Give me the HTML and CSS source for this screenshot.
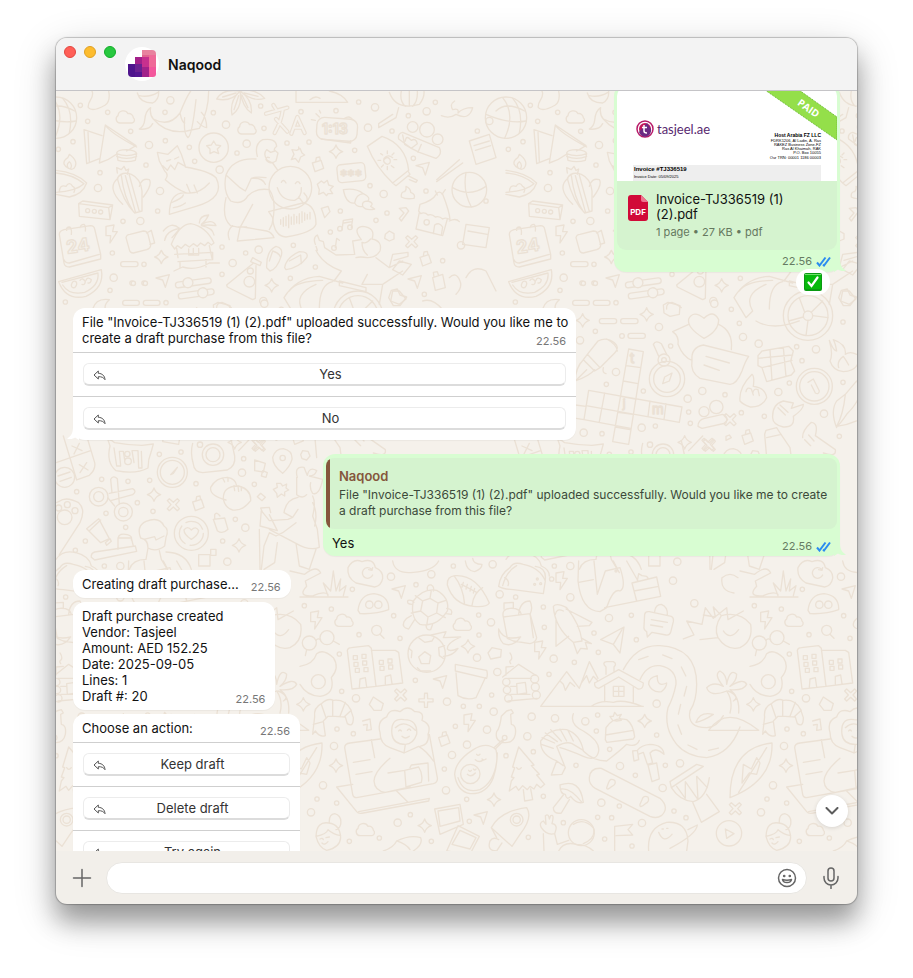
FILE: index.html
```html
<!DOCTYPE html>
<html lang="en">
<head>
<meta charset="utf-8">
<meta name="viewport" content="width=device-width, initial-scale=1">
<title>Naqood</title>
<link rel="stylesheet" href="styles.css">
</head>
<body>
<svg class="defs" aria-hidden="true">
  <defs>
    <symbol id="reply" viewBox="0 0 13 11"><path d="M5.3 1 1 5l4.300 4V6.700c3.300-.1 5.200.7 6.700 3C11.800 6 9.500 3.500 5.300 3.300z"/></symbol>
    <symbol id="ticks" viewBox="0 0 15 11"><path d="M1 6.500 3.500 9.500 9.500 1.500M7 8.500l1 1L14 1.500"/></symbol>
    <symbol id="tail" viewBox="0 0 12 14"><path d="M0 0h6c0 6 1 10 6 12.500-3 1-6 .5-8-1L0 14z"/></symbol>
    <path id="spark" d="M0-20Q5-5 20 0Q5 5 0 20Q-5 5-20 0Q-5-5 0-20z"/>
    <path id="bolt" d="M-16-24 8-28 4-8 18-8-4 26-2 4-16 4z"/>
    <path id="cloud" d="M-16 18a12 12 0 0 1-6-22a16 16 0 0 1 30-6a13 13 0 0 1 16 12a9 9 0 0 1-4 16z"/>
    <path id="plane" d="M-20-8 20-18 8 20 0-2z"/>
    <path id="cross" d="M-18-12-12-18 0-7 12-18 18-12 7 0 18 12 12 18 0 7-12 18-18 12-7 0z"/>
    <path id="tag" d="M-16-6 10-14 18 10-8 20zM-6-10-4-22 6-24 8-14"/>
    <path id="smallRings" d="M73 43h0M155 64h0M95 91h0M224 121h0M51 152h0M328 149h0M7 175h0M400 169h0M472 65h0M327 64h0M416 211h0M270 222h0M132 245h0M305 360h0M201 391h0M169 486h0M264 520h0M232 577h0M268 577h0M162 598h0M28 633h0M543 186h0M614 45h0M624 112h0M693 156h0M759 153h0M735 62h0M840 59h0M908 33h0M896 178h0M942 284h0M1008 120h0M1057 74h0M1138 34h0M1072 202h0M1110 300h0M993 366h0M960 388h0M853 360h0M823 423h0M712 463h0M569 486h0M498 468h0M498 550h0M703 562h0M778 528h0M1160 509h0M1105 610h0M330 635h0M1264 120h0M1290 330h0M1618 721h0M1844 765h0M1651 880h0M1762 900h0M1898 963h0M1903 997h0M1798 1005h0M1638 1028h0M2007 911h0M2056 965h0M2125 976h0M2200 876h0M2238 809h0M2222 767h0M2050 697h0M2026 655h0M2361 693h0M2361 874h0M2350 1036h0M1578 576h0M1614 576h0M137 1165h0M216 1171h0M281 1168h0M310 1090h0M375 1083h0M62 1202h0M150 1267h0M244 1235h0M291 1261h0M209 1309h0M88 1350h0M58 1378h0M145 1425h0M420 1178h0M563 1103h0M595 1180h0M538 1285h0M500 1350h0M1192 1425h0M889 1495h0M745 1544h0M826 1554h0M909 1631h0M1013 1574h0M1080 1481h0M1268 1572h0M1269 1632h0M1379 1518h0M1462 1548h0M1465 1609h0M1487 1464h0M1614 1626h0M1741 1646h0M1726 1573h0M1627 1684h0M1555 1714h0M1479 1750h0M1307 1812h0M1270 1846h0M1222 1846h0M1078 1768h0M1032 1642h0M850 1689h0M857 1801h0M843 1914h0M892 1928h0M1198 1906h0M1350 1994h0M1165 2034h0M1232 2125h0M1462 2116h0M1432 1982h0M1560 2023h0M1621 1920h0M1625 1872h0M1661 1975h0M1738 2053h0M1828 2023h0M1802 1932h0M1690 2145h0M1667 2180h0M1625 2179h0M1646 2244h0M1522 2195h0M1417 2239h0M1240 2191h0M1126 2251h0M1063 2171h0M970 2241h0M880 2251h0M842 2136h0M783 2124h0M1890 2180h0M1728 2265h0M1854 2160h0"/>
    <path id="largeRings" d="M343 28h0M510 101h0M279 162h0M572 158h0M491 236h0M126 291h0M312 300h0M253 390h0M173 560h0M608 476h0M530 516h0M625 638h0M936 110h0M957 49h0M1112 61h0M983 309h0M1215 463h0M1300 90h0M1572 748h0M1680 843h0M1809 708h0M1972 630h0M2061 738h0M2108 758h0M2280 775h0M1939 900h0M1895 923h0M1757 1010h0M1583 1025h0M2167 903h0M2304 968h0M558 1145h0M568 1310h0M514 1412h0M193 1425h0M1005 1457h0M1126 1450h0M1310 1420h0M1331 1510h0M1305 1594h0M1543 1519h0M1659 1581h0M1851 1469h0M1915 1537h0M1493 1703h0M1263 1700h0M1324 1743h0M1173 1832h0M1313 1862h0M1427 1877h0M1414 1936h0M1293 1916h0M1233 1961h0M1188 1992h0M900 1822h0M834 1965h0M801 2083h0M765 2164h0M1025 2195h0M1170 2098h0M1497 1882h0M1588 1891h0M1802 1838h0M1692 2025h0M1872 2017h0M1820 2091h0M1636 2135h0M1758 2196h0"/>
    <g id="doodles">
      <use href="#smallRings" stroke-width="17"/><use href="#smallRings" class="ring-core" stroke-width="9"/>
      <use href="#largeRings" stroke-width="26"/><use href="#largeRings" class="ring-core" stroke-width="18"/>
      <use href="#cloud" x="208" y="78"/><use href="#cloud" x="573" y="111"/><use href="#spark" x="316" y="498"/><use href="#spark" x="647" y="583"/><use href="#spark" x="840" y="182"/><use href="#bolt" x="166" y="430"/><use href="#plane" x="320" y="569"/><use href="#plane" x="1100" y="232"/><use href="#plane" x="1076" y="572"/><use href="#tag" x="785" y="222"/><use href="#tag" x="1108" y="505"/><use href="#cross" x="1067" y="452"/>
      <!-- globe, sock, bowl, whale -->
      <circle cy="80" r="62"/><path d="M-10 20Q30 70-4 142M-60 70Q10 100 60 90M20 22Q54 60 40 126M-30 60Q0 30 56 60M108 0C118 20 92 32 97 50Q110 64 148 42Q164 30 158 0M244 6Q252 36 290 36Q310 26 308 0M250 14Q280 20 306 4"/>
      <path d="M250 114Q264 106 266 88Q268 60 284 50Q280 70 292 84Q340 110 372 66Q390 20 404 0M250 114Q280 118 290 98M292 84Q330 130 392 120L430 112Q458 60 458 0M386 80Q382 130 396 140Q408 134 420 26M424 92Q438 108 452 110Q452 80 436 64M372 66Q378 94 386 96"/>
      <!-- flower, letters, clock -->
      <path d="M552 0Q500-8 482 24Q526 34 552 0Q520 30 528 72Q560 50 552 0Q560 50 586 66Q590 26 552 0Q590 34 626 22Q596-10 552 0M500 18 540 6M534 56 548 14M576 50 558 12M606 16 564 6M720 34H875Q860 8 820 0M720 34V0M762 26Q778 12 792 22"/>
      <g stroke-width="13"><path d="M630 68 694 50M652 42 662 58M680 58Q676 90 656 126M660 84 694 122M706 128 724 78 746 126M714 110H738"/></g>
      <g stroke-width="6" class="core"><path d="M630 68 694 50M652 42 662 58M680 58Q676 90 656 126M660 84 694 122M706 128 724 78 746 126M714 110H738"/></g>
      <rect x="782" y="82" width="122" height="66" rx="22" transform="rotate(4 843 115)"/><path d="M796 144 884 156V150M866 82Q880 72 890 86M780 68 790 78M790 58 794 66M766 86 778 88"/>
      <text x="798" y="128" font-size="42" font-weight="700">1:13</text>
      <!-- samosa, fox, cactus, lamp -->
      <path d="M84 116 92 218 132 202M84 116 138 134M96 124 100 212M130 216 148 102 240 164 212 180M148 102Q160 124 242 168M130 216Q160 206 184 188M182 186Q184 176 212 176Q240 178 242 188L238 208Q212 216 186 208zM182 188Q212 200 242 188M182 196Q212 208 242 196"/>
      <path d="M326 240 310 210 304 184 336 190 364 164 376 190 388 226 366 214 356 236 344 222 334 238 320 224M326 240Q340 252 328 266Q356 292 392 306Q430 310 460 276M388 228Q460 240 480 260Q510 320 420 346L340 370Q340 300 392 306M344 336Q380 322 382 312M352 350Q376 346 388 336M402 304 392 280M424 306 414 282M332 210 344 206M356 204 368 198"/>
      <path d="M236 366Q200 330 184 262Q196 240 226 250Q254 262 258 300L258 360zM208 254 238 362M220 252 250 362M196 254Q204 320 230 358M186 262Q150 290 200 340M250 286Q256 260 280 266Q290 280 262 318M184 246 182 230 196 236 204 226 210 238 218 234 214 250M0 238Q60 244 92 276Q80 310 40 318L0 310M0 246Q50 250 84 278Q60 300 0 304M10 304Q10 280 30 286Q40 270 50 286Q60 290 54 304M38 232Q16 220 28 206Q38 200 40 190Q70 212 54 232Q46 238 38 232M36 230Q30 220 40 212Q50 220 44 232"/>
      <circle cx="473" cy="170" r="44"/><path d="M473 150 480 162 494 164 484 174 488 188 474 182 462 188 462 174 452 164 466 162z"/>
      <!-- cassette, calendar, camera, hut, watermelon -->
      <path d="M68 338 80 330 170 342 162 386 70 376zM68 338 158 350 170 342M158 350 162 386"/><circle cx="95" cy="359" r="6"/><circle cx="115" cy="361" r="6"/><circle cx="134" cy="363" r="6"/>
      <path d="M10 430Q10 420 24 416L104 404Q114 404 116 414L134 490V504L40 528Q26 528 24 516zM24 506Q28 516 40 516L130 490M32 418Q30 408 40 408Q48 410 46 430M72 410Q74 400 84 400Q90 404 88 420"/><text x="34" y="488" font-size="54" font-weight="700" transform="rotate(-8 34 488)">24</text>
      <path d="M210 440Q212 430 222 430L262 420Q274 420 276 430L284 462Q284 472 272 476L232 486Q222 486 220 476zM272 426 286 418 296 456 282 460"/>
      <path d="M346 460Q370 400 404 398Q450 406 474 456L466 462 456 454 446 464 434 456 424 466 412 458 400 468 388 460 376 472 364 464 356 474zM362 472 366 500M460 464 468 502M356 490 470 484 470 506 366 512M372 512V530M450 506V528M354 540 380 528Q420 540 460 516H490M398 474V492H428V472M412 472V492M322 420Q346 390 370 412Q330 420 326 448M348 440 372 412M430 396Q430 374 458 372Q450 390 436 400Q470 382 480 404Q450 400 436 404Q470 410 474 432"/>
      <path d="M8 572 136 536Q146 590 90 616Q30 630 8 572M18 574 126 546Q130 584 86 604Q40 614 20 582M46 582Q50 566 60 572Q66 580 56 590Q46 592 46 582M72 568Q80 558 88 572Q86 584 78 580M90 568Q94 556 106 566Q104 578 96 576"/>
      <rect x="194" y="512" width="52" height="15" rx="7"/><rect x="200" y="628" width="50" height="15" rx="7"/><rect x="262" y="628" width="50" height="15" rx="7"/><g transform="rotate(-8 420 590)"><rect x="360" y="566" width="108" height="17" rx="8"/><circle cx="398" cy="572" r="15" class="core"/><rect x="364" y="600" width="108" height="17" rx="8"/><circle cx="438" cy="608" r="15" class="core"/></g>
      <!-- seated reader, emoji, voice note -->
      <path d="M604 196Q594 160 620 146Q660 140 662 166Q652 174 656 180L644 184 632 176Q620 190 634 208L650 216M640 200Q630 196 630 206Q640 222 660 210L666 186 656 178M600 204Q530 200 510 252L552 290 568 300 574 288M510 252Q500 300 524 330Q560 344 576 314Q600 290 640 296Q664 330 648 400L640 416M510 320Q496 380 524 404L552 410M552 410 544 450 654 440Q648 424 632 420L562 408M552 410 590 340M520 446Q510 420 530 404M630 260Q600 256 586 262L574 288M590 262Q620 260 628 280M546 408H572M650 216 664 236"/>
      <circle cx="703" cy="290" r="64"/><path d="M664 290Q676 330 716 328Q738 318 736 290M676 274Q682 262 690 276M718 278Q726 266 732 278M728 318 742 336Q758 334 752 316L744 306M638 362 740 336Q780 340 780 400Q770 426 690 438Q654 436 650 380zM674 386V400M682 380V406M690 376V404M698 372V410M706 378V400M714 370V400M722 376V396M730 368V398M738 362V394M746 366V388M754 370V384M762 364V384"/>
      <path d="M706 206 714 190 708 176 722 178 732 172 738 186 746 192 734 198 728 214 718 202zM728 176V168"/>
      <path d="M784 280 796 270 804 276 814 268 818 282 832 286 822 296 830 308 816 308 812 314 802 304 788 310 790 296z"/>
      <rect x="844" y="218" width="84" height="54" rx="12" transform="rotate(-6 886 245)"/><text x="852" y="270" font-size="44">***</text>
      <!-- sunscreen, shell, house, hands, cat -->
      <path d="M934 166 978 136Q1050 160 1058 238L1010 276Q960 230 934 166M1010 276 1020 284 1062 250 1056 240M1056 254 1084 268 1080 274 1060 266M985 205Q994 194 1002 205Q1006 218 994 220Q980 216 984 202Q996 188 1010 200M994 180V188M994 226V236M966 208H974M1014 206H1022M974 188 980 192M1008 192 1014 186M976 228 982 222M1006 224 1014 230"/>
      <path d="M862 296Q900 290 922 308Q946 320 936 330Q956 336 944 346L956 354Q930 360 920 346Q904 350 896 336Q870 340 862 296M896 336Q900 310 922 308M920 346Q916 330 936 330M1036 318Q1034 302 1046 302Q1052 296 1050 286Q1064 292 1064 304Q1080 310 1074 322Q1050 326 1036 318M1088 360 1092 340Q1130 330 1142 308 1150 298 1160 310 1180 360 1182 386 1170 378 1160 384 1150 374 1138 378 1128 368 1116 372 1106 362 1094 368zM1090 364 1080 414 1160 434 1174 384M1132 428 1136 402Q1150 392 1160 408L1156 432M1144 312 1138 300M1158 310 1168 296"/><circle cx="1112" cy="394" r="8"/>
      <path d="M1028 144Q1024 128 1040 124L1150 170Q1160 190 1140 202L1090 184 1066 172zM1040 132 1046 160 1066 172 1084 158Q1080 140 1066 148Q1050 130 1048 150M1086 184 1096 160M1000 4Q1020 60 1090 40Q1106 20 1104 0M1036 0Q1030 30 1048 46M1060 0V46M1084 0Q1086 30 1070 46M1028 50 1020 80 968 110V98L1010 70M1142 266 1210 206M1142 272 1220 216M1156 74Q1180 84 1200 70Q1240 90 1250 50Q1220 50 1206 66Q1210 50 1190 56Q1180 40 1196 30"/><circle cx="1070" cy="108" r="16"/><circle cx="1113" cy="116" r="22"/><circle cx="1145" cy="145" r="16"/><circle cx="1240" cy="296" r="52"/><path d="M1190 290Q1240 320 1290 286M1230 244Q1220 300 1246 348M1180 390Q1200 380 1210 392M1240 150 1300 130 1320 200 1260 220zM1254 164 1300 150M1258 178 1304 164M1230 400 1300 410 1290 470 1220 460zM1236 420 1294 430M1230 560Q1250 520 1290 540L1320 600M1180 560Q1200 540 1212 570 1220 590 1200 610"/>
      <!-- dancer, bicycle, flask, slippers, notes -->
      <path d="M858 416 862 388 890 384 886 410M864 396 888 392M838 470 842 442 850 448M778 460Q770 440 784 432L790 448 802 452 806 470 840 492 896 490M784 478 780 466M780 478Q800 520 856 540L834 570M896 490 890 450 916 446Q888 410 920 406Q960 410 948 444 980 450 972 480 960 500 934 500 912 496 900 500M944 444Q930 460 918 454 918 480 934 492M960 500 1000 530 1040 510M934 550 918 580 980 580 1040 540M1000 530 1010 490 1056 484 1056 496 1014 508M1010 536 1030 510 1066 520 1040 552zM980 580 970 640"/>
      <circle cx="852" cy="413" r="7"/><circle cx="882" cy="409" r="7"/><circle cx="834" cy="471" r="7"/><circle cx="906" cy="674" r="74"/><circle cx="906" cy="674" r="60"/><circle cx="906" cy="674" r="14"/><path d="M896 664 880 620M916 664 950 630M920 674 966 680M906 688 900 734M892 678 848 690M684 620Q720 560 790 556L860 576M684 620 720 680 740 660Q710 610 780 580M700 600Q720 570 800 568M790 654Q790 580 830 572M850 570 930 590 930 602 850 584zM750 690Q800 720 880 690"/>
      <path d="M584 512 590 500 616 514 612 524zM590 518 512 582 514 588 590 626 598 622 600 524"/><circle cx="583" cy="540" r="9"/><circle cx="580" cy="572" r="16"/><path d="M632 530Q630 480 660 466Q682 470 676 494Q664 534 642 540zM640 510 650 480Q670 486 674 500M686 530Q690 500 730 482Q760 482 752 500Q730 530 690 536zM700 510 734 492 736 518M482 654Q480 636 498 634Q516 640 526 650M110 654Q120 620 160 626 144 640 148 654M1100 630Q1130 620 1160 656M1004 630 1010 600 1030 600 1050 624 1030 640zM1130 560 1160 550 1168 590 1138 598zM1134 558 1132 544 1144 542 1148 554M988 430 1000 420 1014 428 1014 444 1000 450 986 442zM796 352 816 346 822 362 806 380zM1030 352 1050 350 1058 360 1036 390 1030 382 1044 366z"/>
      <!-- planner, chat bubbles, crossword and friends -->
      <g transform="translate(1182 540)">
        <use href="#spark" x="398" y="148"/><use href="#spark" x="590" y="130"/><use href="#spark" x="704" y="514"/><use href="#cross" x="774" y="520"/><use href="#cross" x="840" y="446"/><use href="#tag" x="892" y="500"/>
        <rect x="448" y="143" width="52" height="15" rx="7"/><rect x="512" y="143" width="52" height="15" rx="7"/><rect x="534" y="187" width="52" height="15" rx="7"/><circle cx="516" cy="195" r="7"/>
        <path d="M640 102 654 94 690 104 688 130 660 136 642 126zM762 202Q710 170 716 144Q730 116 762 142Q790 114 806 146Q806 180 762 202M716 160 668 182Q688 196 684 220 700 260 726 268M806 160Q850 180 844 236M726 268Q722 230 760 222L896 256Q886 270 876 300Q860 340 840 340L750 322Q720 304 726 268M768 256 838 276M762 282 808 298"/>
        <path d="M412 250 444 210Q470 196 494 216Q510 230 494 246L450 290zM470 204Q500 220 502 240M412 250 400 266 434 300 450 290M400 266Q376 290 376 330 420 314 434 296M376 330 410 296M460 290Q456 306 468 308"/>
        <path d="M536 234 580 242 536 520 488 512zM528 284 572 290M520 330 564 338M512 376 556 384M504 424 548 430M496 468 540 476M416 358 696 408 688 454 408 404M416 358 402 446 542 472M376 402 408 406M364 440 402 446M464 366 448 452M600 390 594 436M648 398 642 446"/><text x="540" y="276" font-size="40">t</text><text x="518" y="412" font-size="34">j</text><text x="606" y="430" font-size="40">m</text>
        <circle cx="651" cy="324" r="53"/><circle cx="651" cy="324" r="40"/><circle cx="642" cy="267" r="7"/><circle cx="642" cy="267" r="18"/><path d="M638 338 644 318 666 306 658 330zM626 256 610 220Q618 206 634 218L650 250"/>
        <path d="M924 254 936 240 1016 226 1030 240 1022 270 1034 300 1024 312 950 332 936 290 924 284zM936 290 1026 268M960 236 966 328M1000 230 1008 316M924 262 1028 252"/><circle cx="1093" cy="346" r="54"/><circle cx="1093" cy="346" r="44"/><path d="M1074 334 1090 324 1108 360Q1106 372 1096 366L1084 342"/>
        <path d="M870 390Q866 350 906 310 914 316 910 346 946 350 950 380 936 410 900 408 878 400 870 390M888 362Q890 346 904 354L910 372M908 366Q912 350 924 356L928 374M968 440Q966 400 1000 390L1030 396 1024 412 1060 400Q1062 414 1030 436 1036 470 1000 468 968 460 968 440M990 402 1014 424M984 410 1006 432M1058 500Q1056 480 1084 454 1106 456 1096 494L1156 536Q1160 560 1120 546M1064 506 1082 524M1076 492 1092 510"/>
        <circle cx="762" cy="422" r="15"/><circle cx="799" cy="408" r="20"/><path d="M744 466Q744 446 764 442L818 430Q836 434 828 456L756 472zM1138 208Q1150 240 1160 240 1156 216 1150 206 1190 220 1186 250 1200 240 1220 250M1138 208Q1150 250 1140 270 1150 300 1180 302 1220 300 1226 270M1166 290Q1160 270 1180 256 1190 270 1196 282M1160 470Q1140 420 1160 390L1186 370Q1180 430 1160 466 1200 462 1240 440M1186 370 1220 330Q1250 370 1190 430 1170 460 1160 466M1166 80 1174 58 1192 54 1200 72 1220 78 1200 104 1180 104z"/>
        <path d="M944 490 948 478 980 470 990 486 1020 530 1024 560M944 490 950 560M950 500 994 490M828 508 844 500 838 492 828 496z"/>
      </g>
      <!-- pills, cat mug, gauge, photo camera, hiker -->
      <g transform="translate(0 1035)">
        <use href="#spark" x="294" y="176"/><use href="#spark" x="549" y="328"/><use href="#cross" x="352" y="206"/><use href="#cross" x="610" y="28"/><use href="#tag" x="426" y="204"/>
        <path d="M0 80 104 44M22 0 62 132 100 118Q120 100 116 80L92 0M48 30 78 44M70 22 54 54M70 86 96 102M92 80 72 110"/><circle cx="26" cy="124" r="30"/><path d="M6 120 42 108M12 136 46 124M162 30 156 12Q166 10 176 20 220 28 258 28L292 24 286 46Q276 70 276 96 240 116 180 104 150 80 162 30M174 36 182 90 194 90 190 46 202 46 206 72M234 80 228 44 246 44 248 96 258 96 256 46M410 22Q402 50 412 84 414 108 440 110L514 102Q540 90 536 60L526 14M548 44 590 0"/>
        <circle cx="214" cy="54" r="8"/><circle cx="216" cy="76" r="10"/><circle cx="349" cy="109" r="45"/><circle cx="349" cy="109" r="36"/><path d="M344 116 364 94 352 112z"/><circle cx="471" cy="56" r="32"/><circle cx="471" cy="56" r="21"/><circle cx="432" cy="26" r="8"/>
        <path d="M596 72 628 82 622 108 596 104zM620 104 634 110 630 124 616 120zM680 112Q650 90 650 64 658 38 682 38 710 44 708 70 702 92 680 112M734 56 740 44 756 46 762 60 752 72 738 68z"/><circle cx="680" cy="66" r="8"/>
        <circle cx="128" cy="182" r="28"/><circle cx="128" cy="182" r="15"/><circle cx="202" cy="228" r="27"/><circle cx="202" cy="228" r="14"/><path d="M160 172 230 158Q244 166 230 176L164 194M168 170 164 130Q172 116 184 128L190 204M156 186 176 210M10 196Q30 180 68 200 90 220 72 260L10 356M0 200 10 196"/><circle cx="8" cy="216" r="9"/><circle cx="34" cy="206" r="9"/><circle cx="57" cy="224" r="9"/><circle cx="26" cy="244" r="22"/>
        <path d="M510 192Q460 180 464 154 480 124 514 124 540 128 542 150M502 190Q500 150 548 150 586 160 584 194 560 226 530 222 508 216 502 190M534 150 536 164M546 150 548 166M556 152 556 164M500 126 506 138M516 124 516 136"/>
        <circle cx="406" cy="292" r="51"/><circle cx="406" cy="292" r="36" stroke-dasharray="60 16"/><path d="M406 310Q384 296 384 282 394 268 406 282 420 268 428 284 426 298 406 310M92 278 128 248 160 308 134 320zM100 284 134 252M148 320 162 308 166 316 152 328zM106 364Q104 352 116 348L238 330 242 346 116 372zM186 340V306H226L232 330M186 306Q190 290 214 296 230 300 226 312"/>
        <path d="M472 250 506 246 516 280Q500 296 484 284zM476 248V236Q482 226 492 240M254 306Q240 270 270 256 310 240 324 270 340 280 330 304L326 330Q300 350 276 336 276 310 254 306M264 310 296 302 300 312 324 300M276 336 270 370Q230 370 220 400M310 344 316 370 340 410M330 348Q390 350 406 400M428 356H462V390H428zM464 340H480V358H464z"/>
        <path d="M724 124Q714 90 744 94 750 110 754 118 760 90 782 104 776 120 760 120L800 130Q790 180 770 172 760 158 764 140M722 124V176Q740 190 752 176M726 184Q690 190 684 230L710 244 726 220M770 180Q780 200 770 240L784 280 790 334Q760 346 720 322L640 280M710 244 696 250 640 254 616 224 612 270 664 284 640 236M620 230 614 216 640 214 644 230M720 260 680 290 660 300 640 290M770 200Q786 230 776 270M640 290 624 330 616 400M664 320 656 380 624 400M610 280 612 400M720 322 730 390 760 400 780 340"/>
        <path d="M652 160 664 154 662 142 674 142 680 150 692 144 690 156 698 162 686 168 686 180 676 174 664 184 662 172zM604 182 614 172 628 184 618 194zM0 370Q20 340 60 350 100 360 106 390 130 400 130 420"/>
      </g>
      <!-- mountains, winding road, desk, tools -->
      <g transform="translate(732 1410)">
        <use href="#bolt" x="48" y="178"/><use href="#bolt" x="784" y="60"/><use href="#bolt" x="720" y="268"/><use href="#bolt" x="508" y="486"/><use href="#cloud" x="132" y="178"/><use href="#cloud" x="487" y="190"/><use href="#cloud" x="196" y="806"/><use href="#plane" x="296" y="92"/><use href="#plane" x="420" y="362"/><use href="#plane" x="542" y="770"/><use href="#spark" x="504" y="256"/><use href="#spark" x="582" y="716"/><use href="#spark" x="108" y="614"/><use href="#spark" x="374" y="794"/><use href="#spark" x="1034" y="480"/><use href="#spark" x="1360" y="430"/><use href="#tag" x="432" y="536"/><use href="#cross" x="302" y="402"/><use href="#cross" x="378" y="418" transform="rotate(45 378 418)"/><use href="#cross" x="1306" y="743"/>
        <path d="M0 108H144M84 104 70 66 92 90 100 30 108 90 122 54 118 90 138 74 130 104M-30 30 14 40Q50 10 62 36L16 60 20 76Q-10 108 40 104 70 90 84 100M-48 96Q-90 90-84 50-60 30-36 50"/>
        <path d="M168 66Q140 50 144 20 160-10 186 2 220-10 226 20 250 30 248 52 244 74 224 78zM218 42A16 16 0 1 1 214 24M218 20 216 28 206 26M278 0Q284 40 340 34 400 30 416 0M496 0Q500 30 524 32 546 24 546 10 520 10 518-8M174 148Q180 100 222 98 268 104 266 146 230 160 180 158z"/>
        <circle cx="208" cy="131" r="11"/><circle cx="235" cy="131" r="11"/><circle cx="230" cy="208" r="15"/><path d="M240 220 252 232"/><circle cx="28" cy="246" r="21"/><circle cx="81" cy="230" r="21"/><path d="M48 238Q54 230 62 236M100 240 118 250M20 266 16 284"/>
        <path d="M340 120Q370 80 410 88 450 110 442 150 410 200 360 190 330 170 340 120M368 120 390 112 414 126 410 156 384 168 362 150zM368 120 346 104M390 112 394 88M414 126 438 118M410 156 436 170M384 168 380 194M362 150 334 156M382 86Q380 70 394 72 404 78 400 90M336 130Q318 130 324 118 336 116 342 124M344 176 326 204Q304 200 312 182 320 170 334 164M378 194Q380 210 392 206L398 190M440 142Q460 144 454 160L438 158"/>
        <path d="M442 72Q440 46 466 44 530 40 568 126 560 140 520 136 460 130 442 72M462 44Q490 80 494 130M548 80Q520 96 516 134M484 70 530 94M490 64 486 78M502 70 498 84M514 76 510 90M524 82 520 96"/>
        <path d="M596 76Q600 40 630 20 640 0 670 10 720 20 736 60L730 98 640 86Q608 84 596 76M608 74Q620 30 650 14M614 50Q630 60 624 74M706 16Q740 20 736 56"/><circle cx="712" cy="54" r="3"/><circle cx="704" cy="70" r="3"/><circle cx="722" cy="68" r="3"/>
        <path d="M610 168 690 158 710 230Q708 244 690 248L640 240 622 232zM610 168Q604 144 630 142 660 140 664 160M612 144 612 126 640 124V142M656 160Q660 120 690 120 700 140 690 160M596 204Q610 240 662 228 640 260 610 248 594 230 596 204M690 158 700 230"/>
        <path d="M760 136Q770 124 800 140 840 190 846 240L820 244Q764 200 760 136M766 160Q770 140 790 150M798 144 876 184 868 194 832 196M768 176V256L806 226M820 244 832 278 842 262 862 264 856 244 874 248 846 232"/>
        <path d="M836 0 834 60Q844 150 900 152L920 140Q940 80 960 90 980 80 960 20L916 30 892 100 882 0M836 64 880 56M914 140 1082 106 1070 48 996 66 1010 120M1002 90 1076 76M1012 60 1016 38 1026 44 1040 46 1046 54M940 0 950 20M980 0 1014 60"/><circle cx="948" cy="30" r="3"/>
        <path d="M902 236 972 198 960 276 940 250zM940 250 966 206M1034 160Q1036 150 1048 152L1114 166Q1122 170 1120 182L1112 214Q1108 224 1098 222L1056 214 1042 228 1040 212Q1030 206 1032 196zM1064 152Q1066 130 1084 130 1104 138 1102 162M1054 176 1102 184M1052 192 1088 198"/>
        <path d="M156 384 142 268Q144 260 154 260L206 254 214 262 228 376zM214 268 286 268 296 274 308 366 228 376M178 380 180 354 196 350 200 378M256 370 256 346 272 342 276 368M160 284H172V296H160zM186 280H198V292H186zM162 304H174V316H162zM188 300H200V312H188zM166 322H178V334H166zM192 320H204V332H192zM238 298H250V310H238zM264 294H276V306H264zM240 316H252V328H240zM266 312H278V324H266z"/>
        <circle cx="380" cy="278" r="56"/><path d="M374 272 392 284 388 308 364 308 356 288zM356 230 374 244 396 240 402 230M326 262 336 270 334 290M434 254 416 260 418 284 430 292M352 320 362 330 392 330M394 222 438 212 430 230 482 228Q440 246 442 264 450 274 474 262 460 284 430 286"/>
        <path d="M0 316Q40 310 50 278 70 262 100 290 120 320 94 350 106 400 60 406 20 404 0 370M38 520Q40 500 44 468 40 440 64 428 84 410 100 418 136 414 152 446L160 470Q160 500 142 488L136 468 106 466 84 466 70 480 76 524Q60 530 46 510zM64 430 78 470M98 418V466M136 424 120 466M154 448 132 468M40 490 70 482M208 430 220 408 250 428 244 448 222 448zM188 480 210 474 214 506 200 508 202 490 190 492M564 276 576 260 604 266 602 288 572 294z"/><circle cx="55" cy="362" r="21"/>
        <path d="M466 310 560 328Q564 340 560 352L466 330zM468 336 474 404Q500 420 528 410L556 350M608 348 656 310 706 342M618 342V318L640 316M632 308Q626 300 634 296 638 288 630 276M624 352H694M632 376H648M632 400H690M650 368 676 364 680 396 652 400zM624 420 712 412"/><circle cx="619" cy="363" r="11"/><circle cx="621" cy="387" r="11"/><circle cx="625" cy="412" r="11"/><circle cx="704" cy="354" r="12"/><circle cx="706" cy="378" r="12"/><circle cx="709" cy="402" r="12"/>
        <path d="M722 436 800 332 838 382 868 302 894 352M722 436H1030M780 360 790 370 796 388 810 364 824 376M844 366 860 344 868 366 880 346 892 358M884 366 956 326 1030 366Q1030 386 1014 384L956 348 896 382Q882 380 884 366M914 374V422M1000 376V424M874 436Q900 416 940 424 970 414 1026 436M940 376H972V406H940zM956 376V406M940 391H972M918 340V318Q904 304 920 302H940Q952 308 942 318V332"/>
        <path d="M970 326Q1010 250 1080 254 1190 260 1190 370 1190 420 1170 450 1160 500 1220 500 1250 500 1270 464M1020 356Q1040 310 1080 314 1130 324 1128 370 1120 410 1104 440 1090 500 1130 550 1160 586 1220 590 1290 580 1320 498"/><path d="M1016 296 1056 282M1088 282 1124 296M1144 318 1158 346M1160 376 1152 406M1142 430 1134 464M1134 492 1146 524M1164 552 1200 570M1226 568 1260 560" stroke-dasharray="30 16"/><path d="M1072 344Q1044 350 1046 370 1056 396 1084 392 1100 380 1100 366 1070 380 1072 344"/>
        <path d="M916 536 918 500Q940 466 980 476 1000 490 1004 528L1000 534 920 544zM916 522 1000 508M938 478 930 466 940 466 944 454 952 464 964 460 958 470 964 478 950 480zM998 570 1012 568 1014 580 1030 574 1042 610 1058 606 1050 576Q1066 556 1092 580 1090 552 1050 550 1024 552 1012 568M998 572 1002 600 1016 596 1014 582M1044 612 1070 606 1078 654 1056 662z"/>
        <path d="M820 458Q808 490 850 510 900 540 896 570 890 604 850 586 804 566 780 560M850 570Q880 600 920 600 960 570 980 550 1010 560 1018 538M786 640 754 642 770 600Q720 580 722 540 750 500 800 506 840 520 850 568L816 548Q800 540 770 556L796 620zM724 550 760 562M726 530 764 546M736 516 772 542M752 506 784 540M780 504 800 540M804 508 820 540M770 600 790 614"/>
        <path d="M868 650Q870 620 904 622L1080 712Q1110 740 1084 764 1070 774 1050 766L886 682Q866 670 868 650M926 664Q930 650 944 658 950 670 936 676 920 690 920 680zM1026 716Q1030 702 1044 708 1050 722 1036 728 1018 744 1020 730zM1110 662 1190 610 1210 616 1114 680zM1114 680Q1140 720 1180 722 1220 710 1228 650M1130 676 1156 712 1156 662 1194 716 1190 646 1222 680M1178 724 1204 784 1258 752 1220 700"/>
        <path d="M604 466Q600 500 590 512 584 536 606 544 640 550 646 520 650 492 634 490L632 460 640 456 634 446 620 450zM608 536 582 560M612 538 586 564M464 640Q466 600 520 566 560 540 588 566 596 600 580 650 560 700 510 698 470 690 464 640M474 650Q490 700 540 686 590 660 592 576M530 580Q534 586 540 580M546 594Q550 600 558 594M526 596Q536 606 548 598"/><circle cx="614" cy="530" r="7"/><circle cx="511" cy="639" r="29"/><path d="M506 628Q510 634 514 628M520 624Q526 630 528 624M502 640Q514 650 526 636"/>
        <path d="M656 558 702 612 694 614 718 640 710 642 734 670 722 680 710 670 702 684 690 676 682 686 668 674 656 688 648 676 628 690 634 660 642 650 634 648 644 620 638 618zM670 686 674 720 698 716 692 684M650 620Q656 630 664 620M780 672Q840 650 850 724 830 730 812 706 800 720 796 700 780 700 780 672M784 684Q810 680 844 722M790 702 760 740Q760 760 784 756L808 716"/>
        <path d="M240 514Q230 480 260 468 270 440 300 452 324 430 344 452 374 450 366 478 396 490 384 520 390 550 360 556M240 514Q240 550 270 560M276 520Q270 470 312 476 354 476 350 520 340 550 316 550 280 550 276 520M286 500Q314 474 346 508M270 560 312 576 356 556Q380 570 400 600M316 550 312 576M296 510Q300 504 304 510M322 508Q328 500 332 508M306 526Q316 536 328 526M134 560Q134 548 150 546L240 534M134 560 158 700Q160 710 170 710L400 668Q414 664 412 650L388 520M214 536 224 590M160 604 210 596M168 640 216 632M270 592Q224 630 222 660 224 690 256 694L330 678M264 636 314 628 318 678M314 628 356 618Q370 640 364 664L318 678M330 620 334 612 384 606 386 660M110 678 158 670M110 678 170 752Q176 760 190 756L386 720 388 712 176 752M290 690 324 724"/>
        <path d="M404 744 480 730 490 790 420 820zM414 750 476 740 480 780 420 796zM474 794 538 826 510 880 440 870zM480 808 528 830 510 864 456 850zM574 800Q600 750 680 740 700 770 660 820L636 856zM574 800 636 856M574 800 590 830M606 846 590 870Q560 870 570 840 580 826 596 836"/><circle cx="650" cy="776" r="19"/><circle cx="650" cy="776" r="11"/>
        <path d="M724 800Q716 786 730 780L738 790 736 764Q746 756 748 774L752 764Q764 758 756 788 776 790 764 818 740 824 724 800M730 818 732 870M764 818 772 850 806 838M776 870Q790 840 830 850 860 850 880 870"/><circle cx="844" cy="815" r="39"/><path d="M820 790Q850 770 880 800 890 830 850 848M944 870 944 796 998 790 984 806 998 822 948 824M1046 870Q1040 800 1100 784 1160 780 1164 840L1160 870M1164 806 1192 792Q1190 820 1110 862M1076 814Q1090 850 1116 820M1086 804H1090M1100 802H1104M48 826Q50 780 86 786 120 790 122 830 120 860 80 868 56 860 48 826 80 820 84 806 100 820 122 824M88 786Q86 760 104 758 126 764 122 790 118 804 108 806M60 834Q68 830 70 836M78 830 88 828M66 846Q74 854 84 842M250 870Q280 860 290 840 330 820 362 830 370 850 340 870M290 840Q320 850 330 866"/>
        <circle cx="1287" cy="817" r="38"/><path d="M1276 804 1302 818 1280 832zM1290 710Q1290 560 1416 546 1420 660 1290 710M1316 694 1400 560M1326 666 1330 610 1354 624 1370 590 1380 606 1370 640 1348 636zM1188 484Q1200 450 1240 460 1210 480 1188 484M1226 508Q1280 430 1376 508zM1290 456Q1300 420 1280 390M1316 456Q1320 400 1284 390M1280 390Q1230 410 1220 380 1240 360 1270 376 1240 340 1260 330 1280 340 1280 370 1290 320 1310 340 1310 360 1290 376 1330 350 1340 370 1330 390 1290 386 1320 410 1300 420"/>
        <path d="M1210 162 1246 168 1240 138 1264 164M1264 164Q1240 200 1254 230L1200 236M1264 164Q1320 150 1352 190 1360 240 1320 260 1280 270 1254 230M1150 234 1182 222 1160 180 1206 190 1216 140 1240 172 1280 140 1284 176 1330 150M1270 210Q1290 240 1316 206"/>
      </g>
    </g>
  </defs>
</svg>

<main class="window">
  <header class="titlebar">
    <div class="lights" aria-hidden="true"><i class="light light-close"></i><i class="light light-min"></i><i class="light light-zoom"></i></div>
    <svg class="avatar" viewBox="0 0 34 34" aria-hidden="true">
      <circle cx="17" cy="17" r="17" fill="#fff"/>
      <path d="M17 3h10q4 0 4 4v3H17z" fill="#e8829e"/><path d="M24 8h7v12h-7z" fill="#ef6a98"/><path d="M17 8h7v3h-7z" fill="#e0648f"/>
      <path d="M24 20h7v7q0 3-3 3h-4z" fill="#f3579c"/><path d="M10 10h7v7h-7z" fill="#a3208a"/><path d="M17 10h7v10h-7z" fill="#c8308e"/><path d="M17 20h7v10h-7z" fill="#a2228a"/>
      <path d="M3 17h7v13H7q-4 0-4-4z" fill="#4e148c"/><path d="M10 17h7v9h-7z" fill="#6b2191"/><path d="M10 25h7v5h-7z" fill="#551691"/>
    </svg>
    <h1 class="title">Naqood</h1>
  </header>

  <section class="chat" aria-label="Messages">
    <svg class="wallpaper" aria-hidden="true"><g transform="scale(.33333)"><use href="#doodles" x="-1350"/><use href="#doodles"/><use href="#doodles" x="1350"/><use href="#doodles" x="2700"/><use href="#doodles" x="4050"/></g></svg>

    <article class="bubble sent file-message has-tail">
      <div class="file">
        <svg class="preview" viewBox="0 0 220 94" aria-label="Invoice preview">
          <path fill="#fff" d="M0 0h220v94H0z"/>
          <circle cx="28" cy="42" r="8" fill="none" stroke="#b81a68" stroke-width="1.500"/><circle cx="28" cy="42" r="6" fill="#c2185b"/><path d="M22 45a6 6 0 0 0 12-3L30 36z" fill="#6b2a83"/><path d="M27 38v6q0 2 3 2M25 40.500h5" fill="none" stroke="#fff" stroke-width="1.500"/>
          <text x="40" y="47" class="brand">tasjeel.ae</text>
          <path d="M148 3h34l38 27v23z" fill="#94df4a" stroke="#62b52c" stroke-width="1" stroke-dasharray="1 1"/>
          <text x="191" y="22" class="paid" transform="rotate(35 191 22)">PAID</text>
          <g class="issuer"><text x="204" y="50" class="strong">Host Arabia FZ LLC</text><text x="204" y="55">FDRK1206, Al Ladin, A. Ras</text><text x="204" y="59">RAKEZ Business Zone-FZ</text><text x="204" y="63">Ras Al Khaimah, RAK</text><text x="204" y="67">P.O. Box 10055</text><text x="204" y="72">Our TRN: 00001 1186 00003</text></g>
          <path fill="#eee" d="M16 78h188v16H16z"/>
          <text x="17" y="84" class="invoice-no">Invoice #TJ336519</text><text x="17" y="91" class="invoice-date">Invoice Date: 05/09/2025</text>
        </svg>
        <div class="file-info">
          <svg class="pdf" viewBox="0 0 20 26" aria-hidden="true"><path d="M3 0h10l7 7v16q0 3-3 3H3q-3 0-3-3V3q0-3 3-3z" fill="#d10a38"/><path d="M13 0l7 7h-5q-2 0-2-2z" fill="#ee7590"/><text x="10" y="20">PDF</text></svg>
          <div><p class="file-name">Invoice-TJ336519 (1) (2).pdf</p><p class="file-meta">1 page • 27 KB • pdf</p></div>
        </div>
      </div>
      <div class="receipt"><time>22.56</time><svg class="ticks"><use href="#ticks"/></svg></div>
      <svg class="tail" aria-hidden="true"><use href="#tail"/></svg>
      <span class="reaction"><svg viewBox="0 0 18 18" role="img" aria-label="Check mark"><rect width="18" height="18" rx="2" fill="#0a9a12"/><rect x="1" y="1" width="16" height="15" rx="1" fill="#06b90c"/><path d="M1 1h16v1H1z" fill="#6ee06a"/><path d="M4.500 9.500 7.500 13 13.500 4.500" fill="none" stroke="#fff" stroke-width="2.200" stroke-linecap="round"/></svg></span>
    </article>

    <article class="bubble received prompt prompt-wide has-tail">
      <div class="overlap"><p>File "Invoice-TJ336519 (1) (2).pdf" uploaded successfully. Would you like me to create a draft purchase from this file?</p><time>22.56</time></div>
      <div class="choice"><button type="button"><svg><use href="#reply"/></svg>Yes</button></div>
      <div class="choice"><button type="button"><svg><use href="#reply"/></svg>No</button></div>
      <svg class="tail" aria-hidden="true"><use href="#tail"/></svg>
    </article>

    <article class="bubble sent reply-message has-tail">
      <blockquote><strong>Naqood</strong><p>File "Invoice-TJ336519 (1) (2).pdf" uploaded successfully. Would you like me to create a draft purchase from this file?</p></blockquote>
      <div class="reply-row"><p>Yes</p><div class="receipt"><time>22.56</time><svg class="ticks"><use href="#ticks"/></svg></div></div>
      <svg class="tail" aria-hidden="true"><use href="#tail"/></svg>
    </article>

    <article class="bubble received inline"><p>Creating draft purchase...</p><time>22.56</time></article>
    <article class="bubble received inline stacked"><p>Draft purchase created<br>Vendor: Tasjeel<br>Amount: AED 152.25<br>Date: 2025-09-05<br>Lines: 1<br>Draft #: 20</p><time>22.56</time></article>
    <article class="bubble received prompt prompt-narrow stacked">
      <div class="overlap"><p>Choose an action:</p><time>22.56</time></div>
      <div class="choice"><button type="button"><svg><use href="#reply"/></svg>Keep draft</button></div>
      <div class="choice"><button type="button"><svg><use href="#reply"/></svg>Delete draft</button></div>
      <div class="choice"><button type="button"><svg><use href="#reply"/></svg>Try again</button></div>
    </article>

    <button class="jump" type="button" aria-label="Scroll to latest"><svg viewBox="0 0 14 8"><path d="M1.500 1 7 6.500 12.500 1"/></svg></button>
  </section>

  <form class="composer">
    <button class="icon" type="button" aria-label="Attach"><svg viewBox="0 0 20 20"><path d="M10 1.500v17M1.500 10h17"/></svg></button>
    <div class="field">
      <input type="text" aria-label="Message">
      <button class="icon" type="button" aria-label="Emoji"><svg viewBox="0 0 20 20"><circle cx="10" cy="10" r="8.500"/><path d="M5.500 11.500q4.500 1.500 9 0c-.5 4-8.500 4-9 0z"/><circle cx="7.200" cy="8" r=".6" fill="#666"/><circle cx="12.800" cy="8" r=".6" fill="#666"/></svg></button>
    </div>
    <button class="icon mic" type="button" aria-label="Record voice message"><svg viewBox="0 0 16 22"><rect x="5" y="1" width="6" height="13" rx="3"/><path d="M1 9.500v1.500a7 7 0 0 0 14 0V9.500M8 18v3.500"/></svg></button>
  </form>
</main>
</body>
</html>
```
FILE: styles.css
```css
* { box-sizing: border-box; }
body {
  margin: 0;
  height: 100vh;
  padding: 38px 56px 74px;
  background: #fff;
  color: #111;
  font: 13px/16px Inter, "Liberation Sans", sans-serif;
}
p, h1, blockquote { margin: 0; }
button { padding: 0; border: 0; background: none; font: inherit; color: inherit; }
.defs { position: absolute; width: 0; height: 0; }

.window {
  display: flex;
  flex-direction: column;
  height: 100%;
  overflow: hidden;
  border-radius: 11px;
  background: #f2efea;
  box-shadow: 0 0 1px 1px rgba(0, 0, 0, .22), 0 18px 25px rgba(0, 0, 0, .3), 0 12px 44px rgba(0, 0, 0, .2);
}

.titlebar {
  display: flex;
  flex: none;
  align-items: center;
  height: 53px;
  padding: 0 8px;
  border-bottom: 1px solid #c5c4c7;
  background: #f3f3f3;
}
.lights { display: flex; gap: 8px; align-self: flex-start; padding-top: 8px; }
.light { width: 12px; height: 12px; border: 1px solid; border-radius: 50%; }
.light-close { background: #ff5f57; border-color: #e2463f; }
.light-min { background: #fdbc2e; border-color: #dfa023; }
.light-zoom { background: #28c840; border-color: #12ac28; }
.avatar { width: 34px; height: 34px; margin: 0 9px; }
.title { padding-top: 2px; font-size: 14px; line-height: 18px; font-weight: 600; }

.chat {
  position: relative;
  display: flex;
  flex: 1;
  flex-direction: column;
  align-items: flex-start;
  min-height: 0;
  overflow: hidden;
  padding: 0 17px;
  background: #f5f1eb;
}
.wallpaper {
  position: absolute;
  inset: 0;
  width: 100%;
  height: 100%;
  fill: none;
  stroke: #ebe1d5;
  stroke-width: 4;
  stroke-linecap: round;
  stroke-linejoin: round;
  font-family: Inter, sans-serif;
}
.ring-core { stroke: #f5f1eb; }
.core { stroke: #f5f1eb; }
circle.core { fill: #f5f1eb; stroke: #ebe1d5; }

.bubble {
  position: relative;
  flex: none;
  max-width: 90%;
  margin-top: 14px;
  border-radius: 12px;
  box-shadow: 0 1px 1px rgba(0, 0, 0, .04);
}
.sent { align-self: flex-end; background: #d8fdd2; }
.received { background: #fff; }
.stacked { margin-top: 4px; }
.tail { position: absolute; bottom: 0; width: 12px; height: 14px; }
.sent .tail { right: -6px; fill: #d8fdd2; }
.received .tail { left: -6px; fill: #fff; transform: scaleX(-1); }
time { color: #777; font-size: 11px; line-height: 14px; }
.sent time { color: #667c62; }
.receipt { display: flex; align-items: center; justify-content: flex-end; gap: 4px; }
.ticks { width: 15px; height: 11px; fill: none; stroke: #2b8cf0; stroke-width: 2; }

.file-message { width: 226px; margin-top: -7px; padding: 3px; }
.file { overflow: hidden; border-radius: 9px; background: #d5f3cf; }
.preview { display: block; width: 100%; }
.brand { fill: #58296f; font: 13px Lato, sans-serif; }
.paid { fill: #fff; font: bold 10px "Open Sans", sans-serif; text-anchor: middle; dominant-baseline: middle; }
.issuer { font: 4px "Liberation Sans", sans-serif; text-anchor: end; }
.strong { font-weight: bold; font-size: 5px; }
.invoice-no { font: bold 6px "Liberation Sans", sans-serif; }
.invoice-date { font: 4px "Liberation Sans", sans-serif; }
.file-info { display: flex; gap: 8px; padding: 11px 11px 10px; }
.pdf { flex: none; width: 20px; height: 26px; margin-top: 3px; fill: #fff; font: bold 8px Inter, sans-serif; text-anchor: middle; }
.file-name { line-height: 15px; }
.file-meta { margin-top: 3px; color: #66785f; font-size: 11px; line-height: 15px; }
.file-message .receipt { padding: 4px 6px 1px 0; }
.reaction {
  position: absolute;
  right: 10px;
  bottom: -23px;
  z-index: 1;
  padding: 4px 8px;
  border-radius: 13px;
  background: #fff;
}
.reaction svg { display: block; width: 18px; height: 18px; }

.prompt-wide { width: 503px; margin-top: 36px; }
.prompt-narrow { width: 227px; }
.overlap { display: grid; padding: 6px 5px 4px 9px; }
.overlap > * { grid-area: 1 / 1; }
.overlap p { padding-bottom: 2px; }
.overlap time { place-self: end; padding-right: 5px; }
.choice { padding: 10px 10px 10px; border-top: 1px solid #cfcfcf; }
.choice button {
  display: block;
  position: relative;
  width: 100%;
  height: 23px;
  padding-left: 12px;
  border: 1px solid #ececec;
  border-bottom: 2px solid #dcdcdc;
  border-radius: 6px;
  background: #fff;
  color: #333;
  line-height: 20px;
  text-align: center;
}
.choice svg { position: absolute; left: 9px; top: 6px; width: 13px; height: 11px; fill: none; stroke: #555; stroke-width: 1; stroke-linejoin: round; }

.reply-message { width: 517px; padding: 4px 3px 3px; }
blockquote {
  padding: 10px 6px 10px 13px;
  border-radius: 8px;
  background: linear-gradient(90deg, #85563c 4px, #d5f3cf 4px);
  color: #3c493a;
}
blockquote strong { display: block; margin-bottom: 3px; color: #85563c; font-weight: 600; }
blockquote p { font-size: 12px; }
.reply-row { display: flex; justify-content: space-between; padding: 6px 6px 0; }
.reply-row .receipt { padding-top: 4px; }

.inline { display: flex; gap: 12px; align-items: flex-end; padding: 6px 10px 6px 9px; }
.inline time { margin-bottom: -2px; }

.jump {
  position: absolute;
  right: 9px;
  bottom: 24px;
  display: grid;
  place-items: center;
  width: 32px;
  height: 32px;
  border-radius: 50%;
  background: #fff;
  box-shadow: 0 1px 4px rgba(0, 0, 0, .12);
}
.jump svg { width: 14px; height: 8px; fill: none; stroke: #5c5c5c; stroke-width: 2; stroke-linecap: round; stroke-linejoin: round; }

.composer { display: flex; flex: none; align-items: center; gap: 14px; height: 53px; padding: 0 16px; }
.icon { display: block; flex: none; width: 20px; height: 20px; }
.icon svg { display: block; width: 100%; height: 100%; fill: none; stroke: #666; stroke-width: 1.5; stroke-linecap: round; stroke-linejoin: round; }
.mic { width: 20px; height: 22px; }
.field {
  display: flex;
  flex: 1;
  align-items: center;
  height: 32px;
  padding: 0 9px 0 16px;
  border: 1px solid #e8e6e2;
  border-radius: 16px;
  background: #fff;
}
.field input { flex: 1; min-width: 0; border: 0; outline: 0; background: none; font: inherit; }
```
